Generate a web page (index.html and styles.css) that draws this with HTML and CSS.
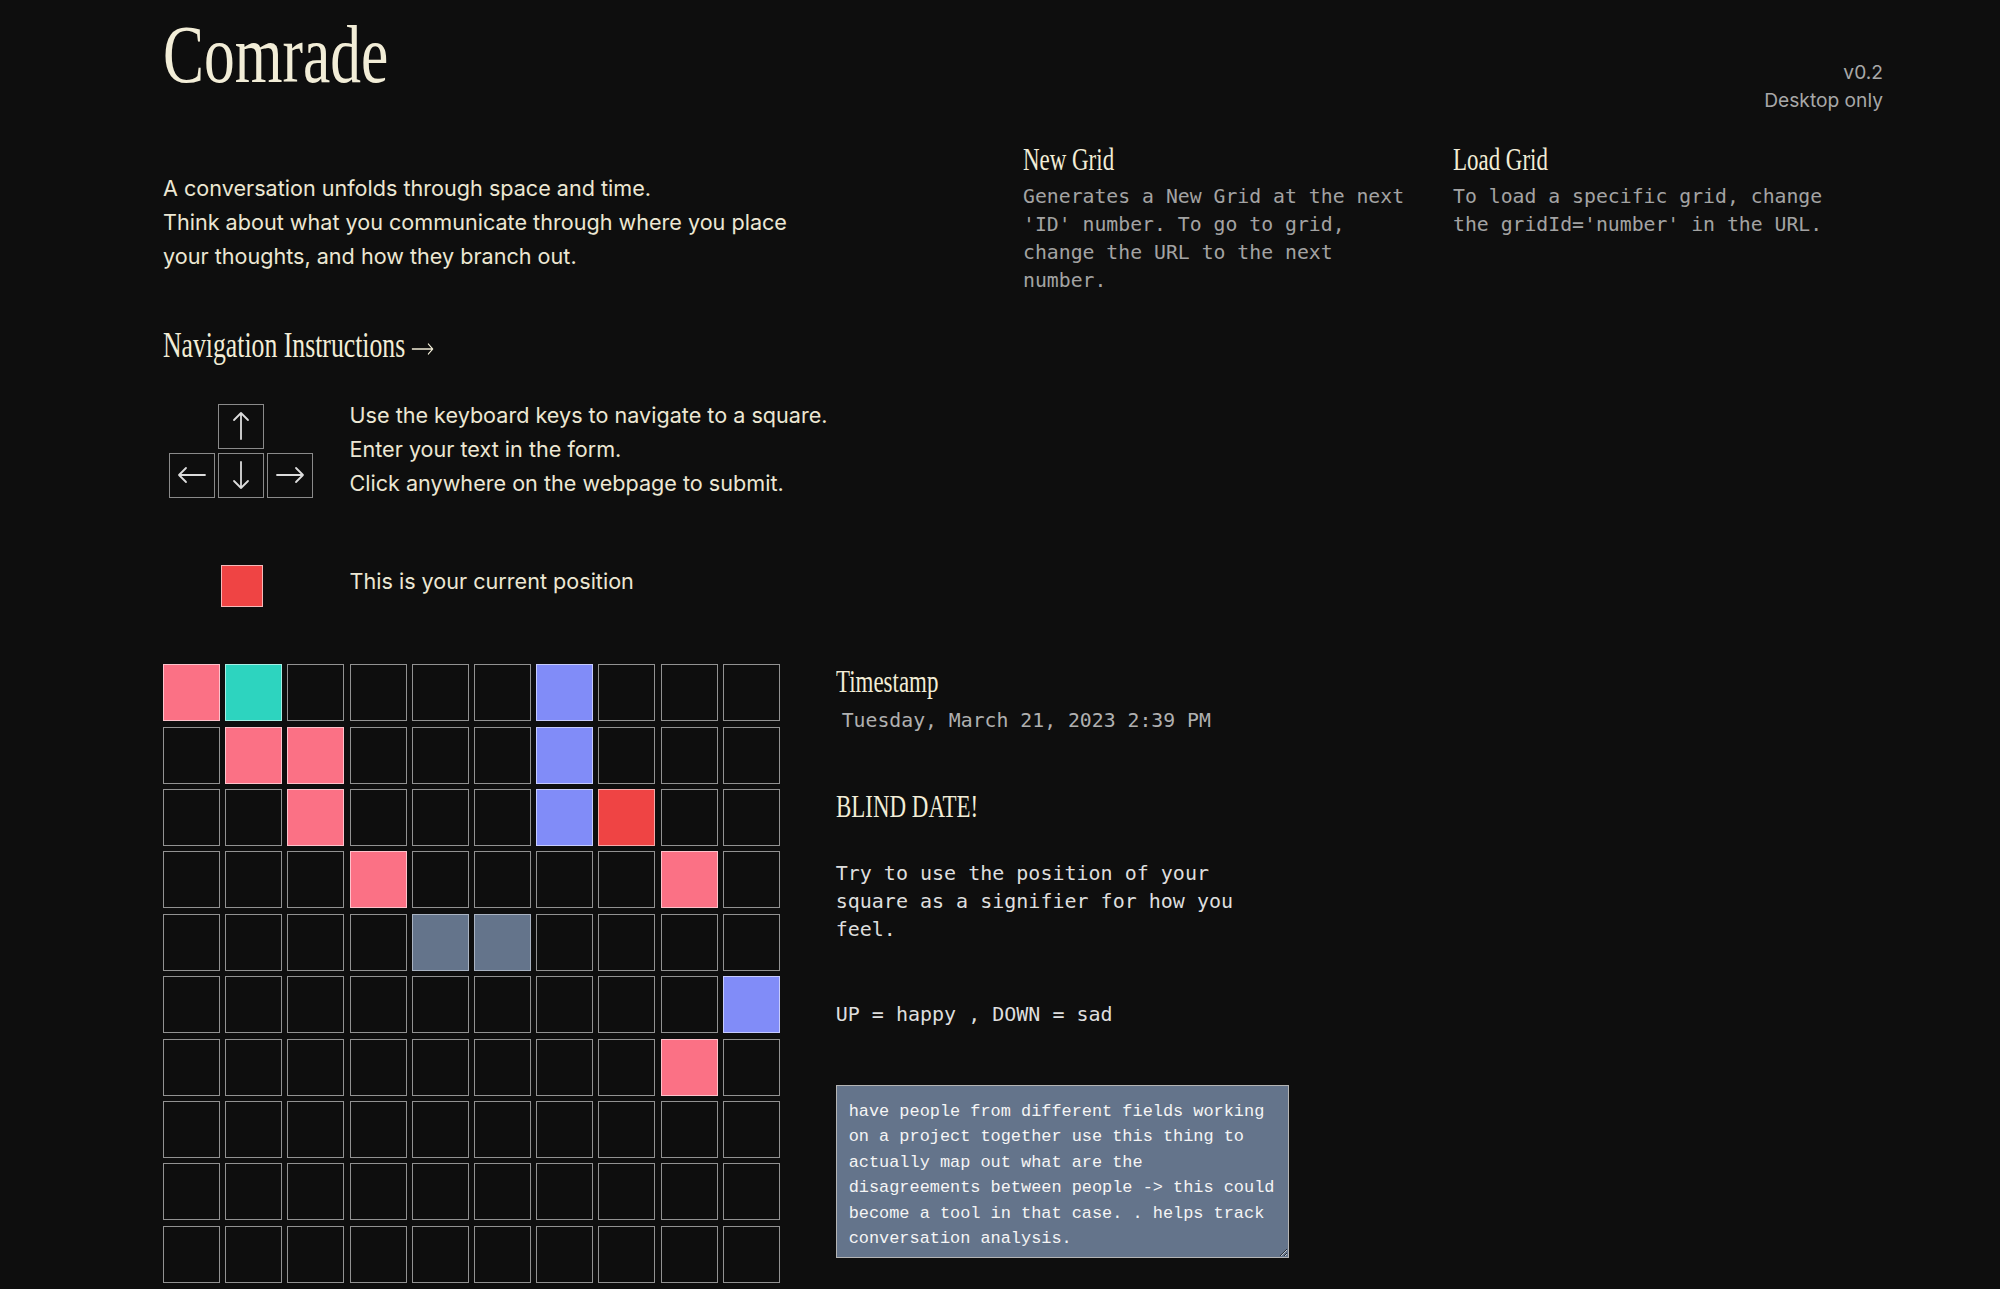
FILE: index.html
```html
<!DOCTYPE html>
<html lang="en">
<head>
<meta charset="utf-8">
<title>Comrade</title>
<link rel="stylesheet" href="styles.css">
</head>
<body>
<div class="page">
  <header class="header">
    <h1 class="title">Comrade</h1>
    <div class="version">
      <div>v0.2</div>
      <div>Desktop only</div>
    </div>
  </header>

  <section class="top">
    <div class="intro-col">
      <p class="intro">A conversation unfolds through space and time.<br>Think about what you communicate through where you place<br>your thoughts, and how they branch out.</p>
      <h2 class="nav-title">Navigation Instructions<span class="nav-arrow"><svg width="31" height="14" viewBox="0 0 31 14"><path d="M1 7 H29 M23 2 L29 7 L23 12" fill="none" stroke="#f2edd7" stroke-width="1.4" stroke-linecap="round" stroke-linejoin="round"/></svg></span></h2>
      <div class="inst-row keys-row">
        <div class="icon-col">
          <div class="keys">
            <div class="key key-up">
              <svg width="28" height="30" viewBox="0 0 28 30"><path d="M14 28 V2 M7 9 L14 2 L21 9" fill="none" stroke="#dcdcdc" stroke-width="1.8" stroke-linecap="round" stroke-linejoin="round"/></svg>
            </div>
            <div class="key key-left">
              <svg width="30" height="28" viewBox="0 0 30 28"><path d="M2 14 H28 M9 7 L2 14 L9 21" fill="none" stroke="#dcdcdc" stroke-width="1.8" stroke-linecap="round" stroke-linejoin="round"/></svg>
            </div>
            <div class="key key-down">
              <svg width="28" height="30" viewBox="0 0 28 30"><path d="M14 2 V28 M7 21 L14 28 L21 21" fill="none" stroke="#dcdcdc" stroke-width="1.8" stroke-linecap="round" stroke-linejoin="round"/></svg>
            </div>
            <div class="key key-right">
              <svg width="30" height="28" viewBox="0 0 30 28"><path d="M2 14 H28 M21 7 L28 14 L21 21" fill="none" stroke="#dcdcdc" stroke-width="1.8" stroke-linecap="round" stroke-linejoin="round"/></svg>
            </div>
          </div>
        </div>
        <div class="inst-text">Use the keyboard keys to navigate to a square.<br>Enter your text in the form.<br>Click anywhere on the webpage to submit.</div>
      </div>
      <div class="inst-row pos-row">
        <div class="icon-col"><div class="pos-square"></div></div>
        <div class="inst-text">This is your current position</div>
      </div>
    </div>

    <div class="info-col">
      <div class="info">
        <h3 class="serif-h">New Grid</h3>
        <p class="info-text">Generates a New Grid at the next 'ID' number. To go to grid, change the URL to the next number.</p>
      </div>
      <div class="info">
        <h3 class="serif-h">Load Grid</h3>
        <p class="info-text">To load a specific grid, change the gridId='number' in the URL.</p>
      </div>
    </div>
  </section>

  <section class="board">
    <div class="grid">
      <div class="cell pink"></div><div class="cell teal"></div><div class="cell"></div><div class="cell"></div><div class="cell"></div><div class="cell"></div><div class="cell indigo"></div><div class="cell"></div><div class="cell"></div><div class="cell"></div>
      <div class="cell"></div><div class="cell pink"></div><div class="cell pink"></div><div class="cell"></div><div class="cell"></div><div class="cell"></div><div class="cell indigo"></div><div class="cell"></div><div class="cell"></div><div class="cell"></div>
      <div class="cell"></div><div class="cell"></div><div class="cell pink"></div><div class="cell"></div><div class="cell"></div><div class="cell"></div><div class="cell indigo"></div><div class="cell red"></div><div class="cell"></div><div class="cell"></div>
      <div class="cell"></div><div class="cell"></div><div class="cell"></div><div class="cell pink"></div><div class="cell"></div><div class="cell"></div><div class="cell"></div><div class="cell"></div><div class="cell pink"></div><div class="cell"></div>
      <div class="cell"></div><div class="cell"></div><div class="cell"></div><div class="cell"></div><div class="cell slate"></div><div class="cell slate"></div><div class="cell"></div><div class="cell"></div><div class="cell"></div><div class="cell"></div>
      <div class="cell"></div><div class="cell"></div><div class="cell"></div><div class="cell"></div><div class="cell"></div><div class="cell"></div><div class="cell"></div><div class="cell"></div><div class="cell"></div><div class="cell indigo"></div>
      <div class="cell"></div><div class="cell"></div><div class="cell"></div><div class="cell"></div><div class="cell"></div><div class="cell"></div><div class="cell"></div><div class="cell"></div><div class="cell pink"></div><div class="cell"></div>
      <div class="cell"></div><div class="cell"></div><div class="cell"></div><div class="cell"></div><div class="cell"></div><div class="cell"></div><div class="cell"></div><div class="cell"></div><div class="cell"></div><div class="cell"></div>
      <div class="cell"></div><div class="cell"></div><div class="cell"></div><div class="cell"></div><div class="cell"></div><div class="cell"></div><div class="cell"></div><div class="cell"></div><div class="cell"></div><div class="cell"></div>
      <div class="cell"></div><div class="cell"></div><div class="cell"></div><div class="cell"></div><div class="cell"></div><div class="cell"></div><div class="cell"></div><div class="cell"></div><div class="cell"></div><div class="cell"></div>
    </div>

    <aside class="side">
      <h3 class="serif-h side-title">Timestamp</h3>
      <p class="date">Tuesday, March 21, 2023 2:39 PM</p>
      <h3 class="serif-h blind">BLIND DATE!</h3>
      <p class="side-text try">Try to use the position of your square as a signifier for how you feel.</p>
      <p class="side-text updown">UP = happy , DOWN = sad</p>
      <textarea class="note">have people from different fields working on a project together use this thing to actually map out what are the disagreements between people -&gt; this could become a tool in that case. . helps track conversation analysis.</textarea>
    </aside>
  </section>
</div>
</body>
</html>
```

FILE: styles.css
```css
html, body {
  margin: 0;
  padding: 0;
}

body {
  background: #0e0e0e;
  color: #ece7d3;
  font-family: Inter, "Noto Sans", "Liberation Sans", sans-serif;
}

.page {
  padding: 0 117px 0 163px;
}

/* header */
.header {
  display: flex;
  justify-content: space-between;
  align-items: flex-start;
}

.title {
  margin: 13px 0 0;
  font-family: "Liberation Serif", serif;
  font-weight: 400;
  font-size: 83px;
  line-height: 83px;
  color: #f2edd7;
  transform: scaleX(0.74);
  transform-origin: 0 50%;
  white-space: nowrap;
}

.version {
  padding-top: 58px;
  text-align: right;
  font-size: 19.2px;
  line-height: 28px;
  color: #a8a8a8;
}

/* top section */
.top {
  display: flex;
  margin-top: 28px;
}

.intro-col {
  width: 860px;
  flex: none;
}

.intro {
  margin: 28.9px 0 0;
  font-size: 21.6px;
  line-height: 34px;
  white-space: nowrap;
}

.nav-title {
  margin: 53.2px 0 0;
  font-family: "Liberation Serif", serif;
  font-weight: 400;
  font-size: 35px;
  line-height: 40px;
  color: #f2edd7;
  transform: scaleX(0.735);
  transform-origin: 0 50%;
  white-space: nowrap;
}

.nav-arrow {
  display: inline-block;
  margin-left: 8px;
  vertical-align: 1px;
}

.nav-arrow svg {
  display: block;
}

.inst-row {
  display: flex;
  align-items: flex-start;
  gap: 30.5px;
}

.keys-row {
  margin-top: 32.3px;
}

.keys-row .keys {
  margin-top: 5.3px;
}

.pos-row {
  margin-top: 63.5px;
}

.icon-col {
  width: 156px;
  flex: none;
  display: flex;
  justify-content: center;
}

.keys {
  display: grid;
  grid-template-columns: repeat(3, 46px);
  grid-template-rows: 45px 45px;
  column-gap: 3px;
  row-gap: 4px;
}

.key {
  box-sizing: border-box;
  border: 1.5px solid #8a8a8a;
  display: flex;
  align-items: center;
  justify-content: center;
}

.key-up { grid-column: 2; grid-row: 1; }
.key-left { grid-column: 1; grid-row: 2; }
.key-down { grid-column: 2; grid-row: 2; }
.key-right { grid-column: 3; grid-row: 2; }

.inst-text {
  font-size: 21.6px;
  line-height: 34px;
  white-space: nowrap;
}

.pos-square {
  box-sizing: border-box;
  width: 42px;
  height: 42px;
  margin: 1.3px 0 0 2px;
  background: #ef4444;
  border: 1px solid #f5b8b8;
}

/* info columns */
.info-col {
  display: flex;
  gap: 30px;
}

.info {
  width: 400px;
}

.serif-h {
  margin: 0;
  font-family: "Liberation Serif", serif;
  font-weight: 400;
  font-size: 31px;
  line-height: 36px;
  color: #f2edd7;
  transform: scaleX(0.74);
  transform-origin: 0 50%;
  white-space: nowrap;
}

.info-text {
  margin: 5px 0 0;
  font-family: "DejaVu Sans Mono", "Liberation Mono", monospace;
  font-size: 19.8px;
  line-height: 28px;
  color: #a3a3a3;
}

/* board */
.board {
  display: flex;
  align-items: flex-start;
  margin-top: 57px;
}

.grid {
  display: grid;
  grid-template-columns: repeat(10, 57px);
  grid-auto-rows: 57px;
  column-gap: 5.2px;
  row-gap: 5.4px;
  flex: none;
}

.cell {
  box-sizing: border-box;
  border: 1px solid rgba(255, 255, 255, 0.55);
  background: #0e0e0e;
}

.cell.pink { background: #fb7185; border-color: #fdc2cb; }
.cell.teal { background: #2dd4bf; border-color: #a6efe5; }
.cell.indigo { background: #818cf8; border-color: #c6cbfc; }
.cell.red { background: #ef4444; border-color: #f7a9a9; }
.cell.slate { background: #64748b; border-color: #a9b3c2; }

.side {
  margin-left: 56px;
  width: 453px;
  flex: none;
}

.side-title {
  margin-top: 0;
}

.date {
  margin: 6.8px 0 0 6px;
  font-family: "DejaVu Sans Mono", "Liberation Mono", monospace;
  font-size: 19.8px;
  line-height: 28px;
  color: #b0b0b0;
  white-space: nowrap;
}

.blind {
  margin-top: 54.5px;
}

.side-text {
  margin: 0;
  width: 440px;
  font-family: "DejaVu Sans Mono", "Liberation Mono", monospace;
  font-size: 20px;
  line-height: 28px;
  color: #dedede;
}

.try {
  margin-top: 33.5px;
}

.updown {
  margin-top: 57px;
}

.note {
  display: block;
  box-sizing: border-box;
  margin-top: 57px;
  width: 453px;
  height: 173px;
  padding: 13px 8px 2px 12px;
  background: #64748b;
  border: 1px solid #b4b4b4;
  color: #f5f5f5;
  font-family: "Liberation Mono", "Courier New", monospace;
  font-size: 16.9px;
  line-height: 25.5px;
  overflow: hidden;
  outline: none;
}
```
